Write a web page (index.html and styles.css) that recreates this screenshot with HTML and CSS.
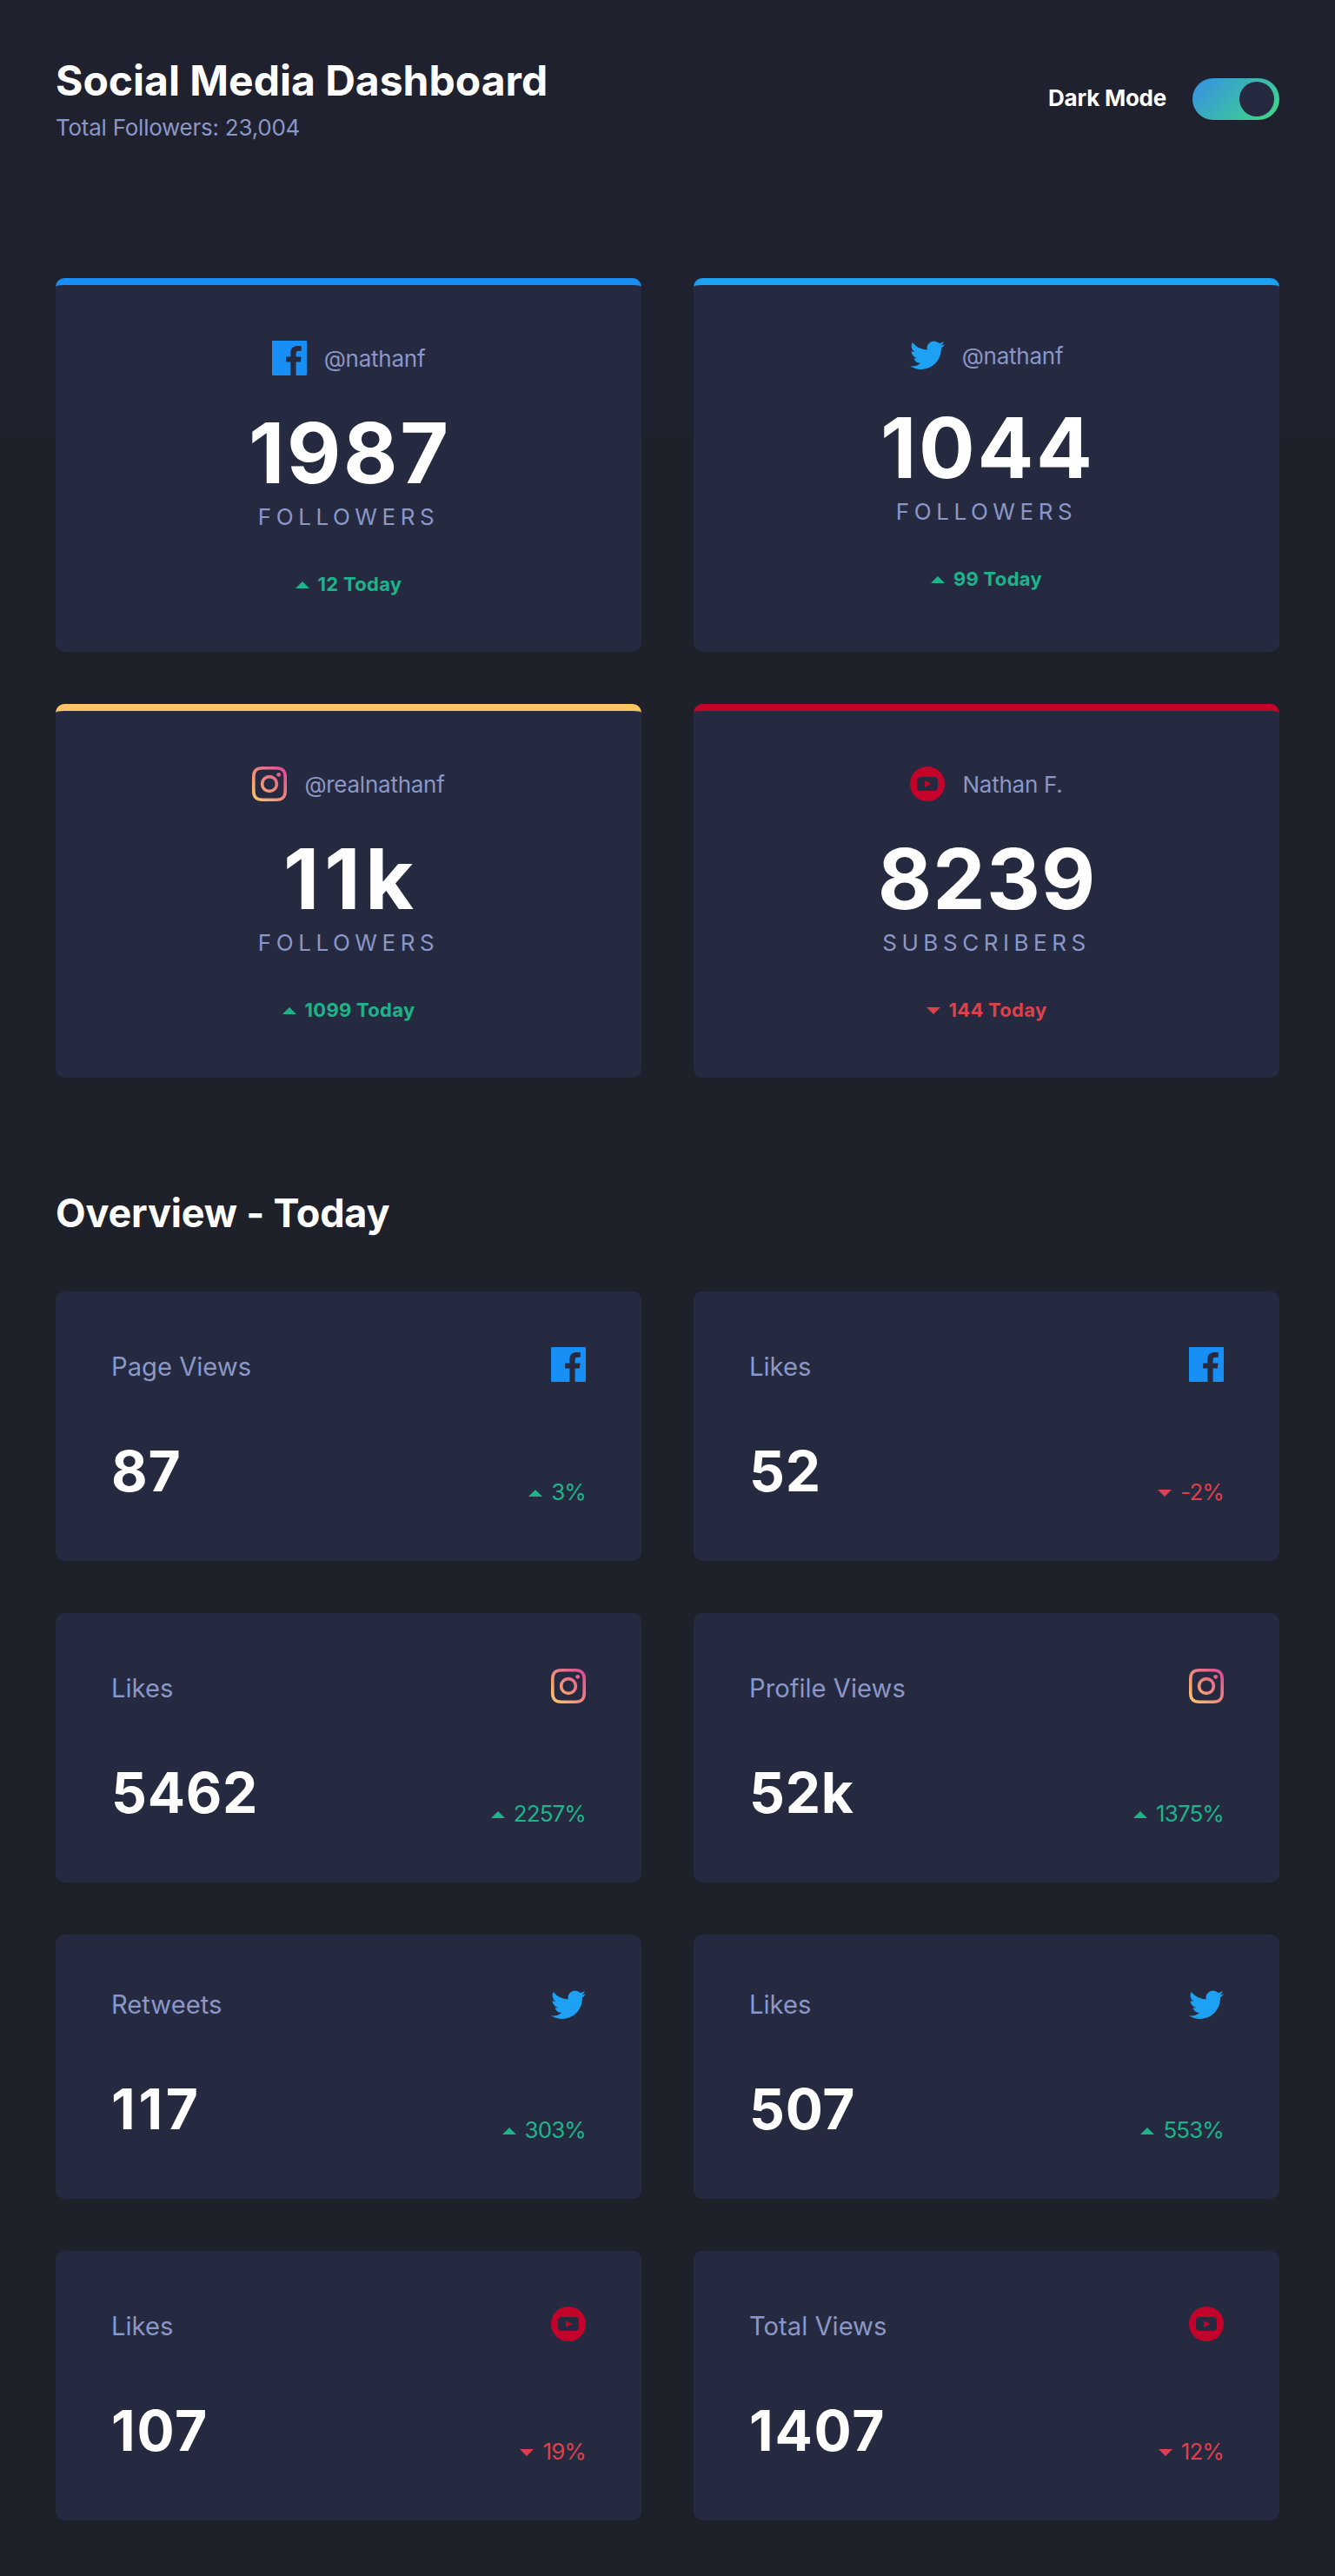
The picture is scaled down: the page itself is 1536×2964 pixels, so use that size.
FILE: index.html
```html
<!DOCTYPE html>
<html lang="en">
<head>
<meta charset="utf-8">
<title>Social Media Dashboard</title>
<link rel="stylesheet" href="styles.css">
</head>
<body>
<svg class="sprite" aria-hidden="true">
  <defs>
    <linearGradient id="ig-grad" gradientUnits="userSpaceOnUse" x1="1" y1="19" x2="19" y2="1">
      <stop offset="0" stop-color="#FDC468"/>
      <stop offset="1" stop-color="#DF4996"/>
    </linearGradient>
    <symbol id="facebook" viewBox="0 0 20 20"><path fill="#178FF5" d="M19.4 0H.6C.25 0 0 .25 0 .6v18.8c0 .35.25.6.6.6h10.084v-7.745H8.076V9.237h2.606V7.01c0-2.583 1.578-3.99 3.883-3.99 1.104 0 2.052.082 2.329.119v2.7h-1.598c-1.254 0-1.496.597-1.496 1.47v1.928h2.989l-.39 3.018h-2.6V20h5.6c.35 0 .6-.25.6-.6V.6c0-.35-.25-.6-.6-.6z"/></symbol>
    <symbol id="twitter" viewBox="0 0 20 17"><path fill="#1DA1F2" d="M20 2.172a8.192 8.192 0 01-2.357.646 4.11 4.11 0 001.805-2.27 8.22 8.22 0 01-2.606.996A4.096 4.096 0 0013.847.248c-2.65 0-4.596 2.472-3.998 5.037A11.648 11.648 0 011.392.998a4.109 4.109 0 001.27 5.478 4.086 4.086 0 01-1.858-.513c-.045 1.9 1.318 3.679 3.291 4.075a4.113 4.113 0 01-1.853.07 4.106 4.106 0 003.833 2.849A8.25 8.25 0 010 14.658a11.616 11.616 0 006.29 1.843c7.618 0 11.922-6.434 11.662-12.205A8.354 8.354 0 0020 2.172z"/></symbol>
    <symbol id="instagram" viewBox="0 0 20 20">
      <path fill="none" stroke="url(#ig-grad)" stroke-width="1.8" d="M6 .9h8C17.600 .9 19.100 2.400 19.100 6v8c0 3.600-1.500 5.100-5.100 5.100H6C2.400 19.100 .9 17.600 .9 14V6C.9 2.400 2.400 .9 6 .9z"/>
      <circle cx="10" cy="10" r="4.200" fill="none" stroke="url(#ig-grad)" stroke-width="1.800"/>
      <circle cx="15.340" cy="4.660" r="1.200" fill="url(#ig-grad)"/>
    </symbol>
    <symbol id="youtube" viewBox="0 0 20 20"><path fill="#C4032B" fill-rule="evenodd" d="M10 0a10 10 0 100 20 10 10 0 000-20zM6.200 6C4.700 6 4 6.700 4 8.100v3.800C4 13.300 4.700 14 6.200 14h7.600c1.500 0 2.200-.7 2.200-2.100V8.100C16 6.700 15.300 6 13.800 6zM8.500 8.100v3.800L12.300 10z"/></symbol>
    <symbol id="up" viewBox="0 0 16 8"><path fill="#1DB489" d="M0 8L8 0l8 8z"/></symbol>
    <symbol id="down" viewBox="0 0 16 8"><path fill="#DC414C" d="M0 0l8 8 8-8z"/></symbol>
  </defs>
</svg>
<header class="header">
  <div>
    <h1 class="title">Social Media Dashboard</h1>
    <p class="total">Total Followers: 23,004</p>
  </div>
  <div class="mode"><span class="mode-label">Dark Mode</span><span class="toggle"><span class="knob"></span></span></div>
</header>
<main>
  <section class="grid">
    <article class="card follow facebook">
      <div class="account"><svg class="icon"><use href="#facebook"/></svg><span>@nathanf</span></div>
      <div class="count open">1987</div><div class="unit">Followers</div>
      <div class="today up"><svg class="arrow"><use href="#up"/></svg><span>12 Today</span></div>
    </article>
    <article class="card follow twitter">
      <div class="account"><svg class="icon bird"><use href="#twitter"/></svg><span>@nathanf</span></div>
      <div class="count open">1044</div><div class="unit">Followers</div>
      <div class="today up"><svg class="arrow"><use href="#up"/></svg><span>99 Today</span></div>
    </article>
    <article class="card follow instagram">
      <div class="account"><svg class="icon"><use href="#instagram"/></svg><span>@realnathanf</span></div>
      <div class="count wide">11k</div><div class="unit">Followers</div>
      <div class="today up"><svg class="arrow"><use href="#up"/></svg><span>1099 Today</span></div>
    </article>
    <article class="card follow youtube">
      <div class="account"><svg class="icon"><use href="#youtube"/></svg><span>Nathan F.</span></div>
      <div class="count">8239</div><div class="unit">Subscribers</div>
      <div class="today down"><svg class="arrow"><use href="#down"/></svg><span>144 Today</span></div>
    </article>
  </section>
  <h2 class="subtitle">Overview - Today</h2>
  <section class="grid">
    <article class="card stat">
      <div class="top"><span class="label">Page Views</span><svg class="icon"><use href="#facebook"/></svg></div>
      <div class="bottom"><span class="value">87</span><span class="change up"><svg class="arrow"><use href="#up"/></svg>3%</span></div>
    </article>
    <article class="card stat">
      <div class="top"><span class="label">Likes</span><svg class="icon"><use href="#facebook"/></svg></div>
      <div class="bottom"><span class="value">52</span><span class="change down"><svg class="arrow"><use href="#down"/></svg>-2%</span></div>
    </article>
    <article class="card stat">
      <div class="top"><span class="label">Likes</span><svg class="icon"><use href="#instagram"/></svg></div>
      <div class="bottom"><span class="value">5462</span><span class="change up"><svg class="arrow"><use href="#up"/></svg>2257%</span></div>
    </article>
    <article class="card stat">
      <div class="top"><span class="label">Profile Views</span><svg class="icon"><use href="#instagram"/></svg></div>
      <div class="bottom"><span class="value">52k</span><span class="change up"><svg class="arrow"><use href="#up"/></svg>1375%</span></div>
    </article>
    <article class="card stat">
      <div class="top"><span class="label">Retweets</span><svg class="icon bird"><use href="#twitter"/></svg></div>
      <div class="bottom"><span class="value wide">117</span><span class="change up"><svg class="arrow"><use href="#up"/></svg>303%</span></div>
    </article>
    <article class="card stat">
      <div class="top"><span class="label">Likes</span><svg class="icon bird"><use href="#twitter"/></svg></div>
      <div class="bottom"><span class="value">507</span><span class="change up"><svg class="arrow"><use href="#up"/></svg>553%</span></div>
    </article>
    <article class="card stat">
      <div class="top"><span class="label">Likes</span><svg class="icon"><use href="#youtube"/></svg></div>
      <div class="bottom"><span class="value open">107</span><span class="change down"><svg class="arrow"><use href="#down"/></svg>19%</span></div>
    </article>
    <article class="card stat">
      <div class="top"><span class="label">Total Views</span><svg class="icon"><use href="#youtube"/></svg></div>
      <div class="bottom"><span class="value open">1407</span><span class="change down"><svg class="arrow"><use href="#down"/></svg>12%</span></div>
    </article>
  </section>
</main>
</body>
</html>
```
FILE: styles.css
```css
* { box-sizing: border-box; margin: 0; }
body {
  padding: 64px;
  font: 400 26px Inter, "Liberation Sans", sans-serif;
  color: #8b97c6;
  background: linear-gradient(#1f212e 500px, #1e2129 500px);
}
.sprite { position: absolute; width: 0; height: 0; }
.header { display: flex; justify-content: space-between; align-items: center; height: 98px; margin-bottom: 158px; }
.title { font-size: 48px; font-weight: 700; line-height: 58px; color: #fff; }
.total { line-height: 31px; margin-top: 9px; letter-spacing: -0.25px; }
.mode { display: flex; align-items: center; gap: 30px; margin-top: 2px; font-weight: 700; letter-spacing: -0.25px; color: #fff; }
.mode-label { padding-bottom: 3px; }
.toggle { display: flex; justify-content: flex-end; width: 100px; height: 48px; padding: 4px 6px; border-radius: 24px; background: linear-gradient(135deg, #378fe6, #3eda82); }
.knob { width: 40px; height: 40px; border-radius: 50%; background: #252a41; }
.grid { display: grid; grid-template-columns: 1fr 1fr; gap: 60px; }
.card { padding: 64px; border-radius: 10px; background: #252a41; }
.icon { display: block; width: 40px; height: 40px; }
.bird { height: 34px; }
.arrow { display: block; width: 16px; height: 8px; }
.up { color: #1db489; }
.down { color: #dc414c; }

.follow { height: 430px; border-top: 8px solid; text-align: center; }
.facebook { border-color: #198ff5; }
.twitter { border-color: #1da1f2; }
.instagram { border-color: #ffc463; }
.youtube { border-color: #c4032b; }
.account { display: flex; justify-content: center; align-items: center; gap: 20px; letter-spacing: -0.25px; }
.count, .value { --track: 0.012em; letter-spacing: var(--track); font-weight: 700; color: #fff; }
.open { --track: 0.028em; }
.wide { --track: 0.06em; }
.count { margin-top: 31px; padding-left: var(--track); font-size: 96px; line-height: 116px; }
.unit { line-height: 32px; letter-spacing: 5.55px; text-transform: uppercase; }
.today { display: flex; justify-content: center; align-items: center; gap: 10px; margin-top: 48px; font-size: 22px; font-weight: 700; line-height: 27px; letter-spacing: 0.28px; }

.subtitle { margin: 129px 0 63px; font-size: 45px; font-weight: 700; line-height: 54px; letter-spacing: -0.2px; color: #fff; }
.top, .bottom { display: flex; justify-content: space-between; align-items: flex-end; }
.label { font-size: 29.2px; line-height: 34px; }
.bottom { margin-top: 64px; }
.value { font-size: 64px; line-height: 78px; }
.change { display: flex; align-items: center; gap: 10px; line-height: 31px; letter-spacing: -0.9px; }
.change .arrow { margin-top: 3px; }
```
